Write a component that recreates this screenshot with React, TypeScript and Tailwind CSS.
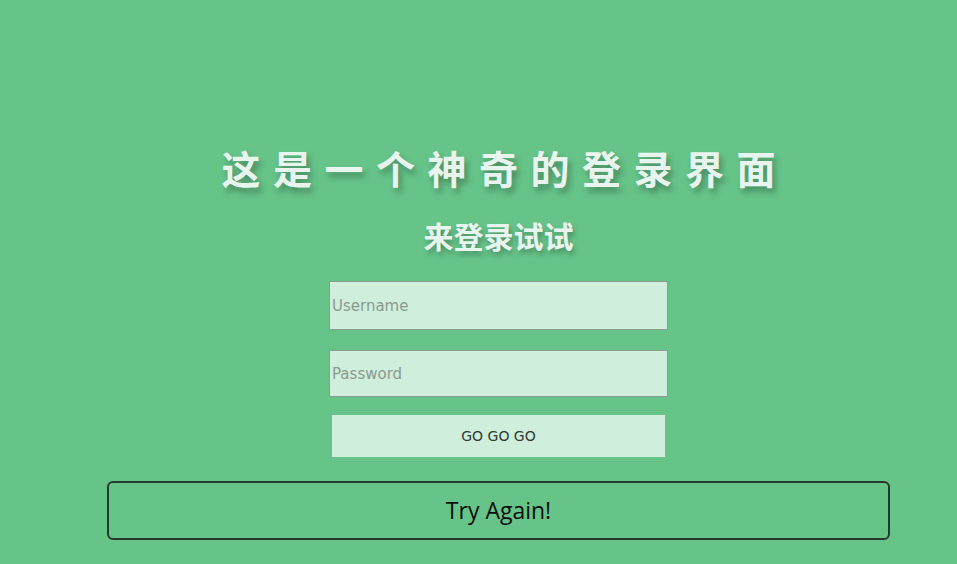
export default function App() {
  return (
    <div className="min-h-[564px] w-full bg-[#66c489] overflow-hidden font-['Noto_Sans_CJK_SC',sans-serif]">
      <div className="flex flex-col items-center pl-[40px] pt-[140px]">
        <h1 className="text-[39px] leading-[54px] font-bold text-[#e8f5ee] tracking-[12.5px] pl-[12.5px] [text-shadow:3px_5px_6px_rgba(0,0,0,0.3)]">
          这是一个神奇的登录界面
        </h1>
        <h2 className="mt-[20px] text-[30px] leading-[42px] font-bold text-[#e8f5ee] [text-shadow:2px_4px_5px_rgba(0,0,0,0.25)]">
          来登录试试
        </h2>
        <input
          placeholder="Username"
          className="mt-[25px] w-[339px] h-[49px] bg-[#d0eedc] border border-[#8a9e90] pl-[2px] text-[15px] outline-none font-['DejaVu_Sans',sans-serif] placeholder:text-[#8a9a8f]"
        />
        <input
          placeholder="Password"
          type="password"
          className="mt-[20px] w-[339px] h-[47px] bg-[#d0eedc] border border-[#8a9e90] pl-[2px] text-[15px] outline-none font-['DejaVu_Sans',sans-serif] placeholder:text-[#8a9a8f]"
        />
        <button className="mt-[18px] w-[333px] h-[42px] bg-[#d0eedc] text-[14px] text-[#2f3a33] font-['DejaVu_Sans',sans-serif]">
          GO GO GO
        </button>
        <button className="mt-[24px] w-[783px] h-[59px] border-2 border-[#24392b] rounded-[6px] text-[23px] text-[#0d0d0d] font-['Open_Sans',sans-serif]">
          Try Again!
        </button>
      </div>
    </div>
  );
}
